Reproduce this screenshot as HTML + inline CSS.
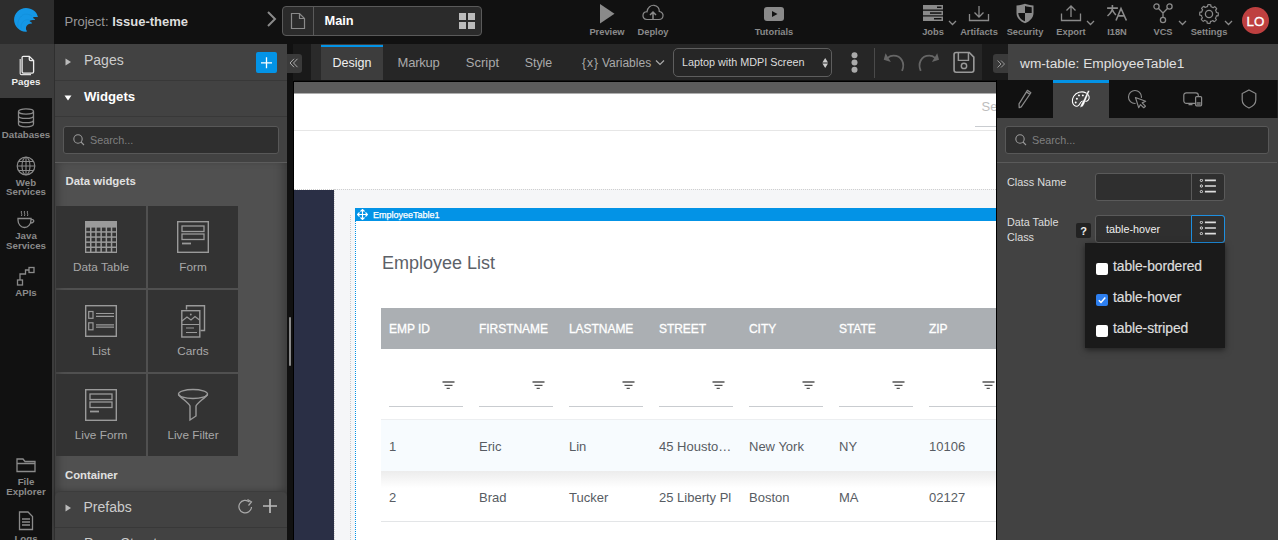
<!DOCTYPE html>
<html><head><meta charset="utf-8"><style>
html,body{margin:0;padding:0;width:1278px;height:540px;overflow:hidden;background:#111;}
body{position:relative;font-family:"Liberation Sans",sans-serif;}
.a{position:absolute;display:block;}
.t{position:absolute;line-height:1;white-space:nowrap;font-family:"Liberation Sans",sans-serif;}
</style></head><body>
<div class="a" style="left:0px;top:0px;width:1278px;height:44px;background:#111;"></div>
<div class="a" style="left:0px;top:0px;width:54px;height:44px;background:#2d2d2d;"></div>
<svg class="a" style="left:13px;top:7px;" width="26" height="26" viewBox="0 0 540 540"><path fill="#1497e6" d="M515 200 C500 100 390 20 270 20 C135 20 22 130 22 265 C22 400 130 510 265 515 C285 515 295 505 285 495 C265 470 262 420 285 390 C310 360 350 345 385 345 C400 345 400 332 390 325 C370 310 345 305 348 292 C352 278 400 272 445 270 C460 270 460 255 448 248 C430 238 410 230 418 218 C428 205 470 208 510 210 C525 210 522 198 515 200 Z"/><path fill="none" stroke="#0d7fc4" stroke-width="7" stroke-dasharray="14 6" d="M105 420 C85 320 120 220 210 160 C260 140 340 145 400 190 M170 445 C160 360 190 300 250 275 C290 262 330 268 350 280"/></svg>
<div class="t" style="left:64.5px;top:14px;line-height:15px;font-size:13px;color:#999;font-weight:400;">Project: <span style="color:#ddd;font-weight:700">Issue-theme</span></div>
<svg class="a" style="left:264px;top:9px;" width="14" height="20" viewBox="0 0 14 20"><path d="M4 3 L11 10 L4 17" fill="none" stroke="#8a8a8a" stroke-width="2"/></svg>
<div class="a" style="left:282px;top:6px;width:200px;height:30px;background:#2b2b2b;border:1px solid #5a5a5a;border-radius:4px;box-sizing:border-box;"></div>
<div class="a" style="left:313px;top:7px;width:1px;height:28px;background:#5a5a5a;"></div>
<svg class="a" style="left:290px;top:12px;" width="16" height="18" viewBox="0 0 16 18"><path d="M1.5 1.5 H9.5 L14.5 6.5 V16.5 H1.5 Z M9.5 1.5 V6.5 H14.5" fill="none" stroke="#8a8a8a" stroke-width="1.2"/></svg>
<div class="t" style="left:324.5px;top:13px;line-height:15px;font-size:12.8px;color:#fff;font-weight:700;">Main</div>
<svg class="a" style="left:459px;top:13px;" width="16" height="16" viewBox="0 0 16 16"><rect x="0" y="0" width="7" height="7" fill="#bbb"/><rect x="9" y="0" width="7" height="7" fill="#bbb"/><rect x="0" y="9" width="7" height="7" fill="#bbb"/><rect x="9" y="9" width="7" height="7" fill="#bbb"/></svg>
<svg class="a" style="left:600px;top:4px;" width="15" height="20" viewBox="0 0 15 20"><path d="M0 0 L14.5 9.7 L0 19.4 Z" fill="#8a8a8a"/></svg>
<div class="t" style="left:407px;width:400px;text-align:center;top:27px;line-height:10px;font-size:9.3px;color:#8a8a8a;font-weight:700;">Preview</div>
<svg class="a" style="left:642px;top:4px;" width="22" height="18" viewBox="0 0 22 18"><path d="M5 15.5 C1.5 15.5 0.8 12.5 1 11 C1.3 8.5 3.5 7.5 5 7.8 C5.5 3.5 9 1 12 1.3 C15.5 1.6 17.5 4.5 17.3 7.5 C20 7.8 21.3 10 21 12 C20.7 14.5 18.5 15.5 17 15.5 Z" fill="none" stroke="#8a8a8a" stroke-width="1.2"/><path d="M11 16 V8.5 M8 11 L11 8 L14 11" fill="none" stroke="#8a8a8a" stroke-width="1.5"/></svg>
<div class="t" style="left:453px;width:400px;text-align:center;top:27px;line-height:10px;font-size:9.3px;color:#8a8a8a;font-weight:700;">Deploy</div>
<svg class="a" style="left:764px;top:7px;" width="20" height="14" viewBox="0 0 20 14"><rect x="0" y="0" width="20" height="14" rx="3" fill="#8a8a8a"/><path d="M8 4 L13.5 7 L8 10 Z" fill="#111"/></svg>
<div class="t" style="left:574px;width:400px;text-align:center;top:27px;line-height:10px;font-size:9.3px;color:#8a8a8a;font-weight:700;">Tutorials</div>
<svg class="a" style="left:923px;top:5px;" width="20" height="16" viewBox="0 0 20 16"><rect x="0" y="0" width="20" height="4.5" fill="#8a8a8a"/><rect x="0" y="5.8" width="20" height="4.5" fill="#8a8a8a"/><rect x="0" y="11.5" width="20" height="4.5" fill="#8a8a8a"/><rect x="14" y="1.5" width="4.5" height="1.5" fill="#111"/><rect x="7" y="7.3" width="11.5" height="1.5" fill="#111"/><rect x="11" y="13" width="7.5" height="1.5" fill="#111"/></svg>
<div class="t" style="left:733px;width:400px;text-align:center;top:27px;line-height:10px;font-size:9.3px;color:#8a8a8a;font-weight:700;">Jobs</div>
<svg class="a" style="left:948px;top:19.5px;" width="9" height="6" viewBox="0 0 9 6"><path d="M1 1 L4.5 4.5 L8 1" fill="none" stroke="#8a8a8a" stroke-width="1.3"/></svg>
<svg class="a" style="left:968px;top:5px;" width="22" height="18" viewBox="0 0 22 18"><path d="M1.5 9 V15.5 H20.5 V9" fill="none" stroke="#8a8a8a" stroke-width="1.3"/><path d="M11 1 V12 M6.5 7.5 L11 12 L15.5 7.5" fill="none" stroke="#8a8a8a" stroke-width="1.3"/></svg>
<div class="t" style="left:779px;width:400px;text-align:center;top:27px;line-height:10px;font-size:9.3px;color:#8a8a8a;font-weight:700;">Artifacts</div>
<svg class="a" style="left:1015px;top:3px;" width="20" height="21" viewBox="0 0 20 21"><path d="M1.5 2.5 C5 2.5 8 1.5 10 0.8 C12 1.5 15 2.5 18.5 2.5 V10 C18.5 15 14.5 18.5 10 20.3 C5.5 18.5 1.5 15 1.5 10 Z" fill="#8a8a8a"/><path d="M10 3 V10 H3.3 C3.5 14 6.5 17 10 18.3 V10 H16.7 V4.2 C14.5 4.1 12 3.6 10 3 Z" fill="#111"/></svg>
<div class="t" style="left:825px;width:400px;text-align:center;top:27px;line-height:10px;font-size:9.3px;color:#8a8a8a;font-weight:700;">Security</div>
<svg class="a" style="left:1060px;top:4px;" width="22" height="19" viewBox="0 0 22 19"><path d="M1.5 9.5 V16.5 H20.5 V9.5" fill="none" stroke="#8a8a8a" stroke-width="1.3"/><path d="M11 13 V2 M6.5 6.5 L11 2 L15.5 6.5" fill="none" stroke="#8a8a8a" stroke-width="1.3"/></svg>
<div class="t" style="left:871px;width:400px;text-align:center;top:27px;line-height:10px;font-size:9.3px;color:#8a8a8a;font-weight:700;">Export</div>
<svg class="a" style="left:1086px;top:19.5px;" width="9" height="6" viewBox="0 0 9 6"><path d="M1 1 L4.5 4.5 L8 1" fill="none" stroke="#8a8a8a" stroke-width="1.3"/></svg>
<svg class="a" style="left:1102px;top:2px;" width="28" height="22" viewBox="0 0 28 22"><path d="M5.1 6.1 H15.9 M10.4 3 V6.1 C10.4 9 8 12 5.5 14 M10.4 7.8 C11 10 12.5 11.5 13.9 13 M14 18.5 L19 6.5 L24.4 18.5 M16 13.9 H22.2" fill="none" stroke="#8a8a8a" stroke-width="1.6"/></svg>
<div class="t" style="left:917px;width:400px;text-align:center;top:27px;line-height:10px;font-size:9.3px;color:#8a8a8a;font-weight:700;">I18N</div>
<svg class="a" style="left:1153px;top:3px;" width="20" height="21" viewBox="0 0 20 21"><circle cx="3.5" cy="3.5" r="2.6" fill="none" stroke="#8a8a8a" stroke-width="1.3"/><circle cx="16.5" cy="3.5" r="2.6" fill="none" stroke="#8a8a8a" stroke-width="1.3"/><circle cx="10" cy="17" r="2.6" fill="none" stroke="#8a8a8a" stroke-width="1.3"/><path d="M5.3 5.3 L10 10 L14.7 5.3 M10 10 V14.4" fill="none" stroke="#8a8a8a" stroke-width="1.3"/></svg>
<div class="t" style="left:963px;width:400px;text-align:center;top:27px;line-height:10px;font-size:9.3px;color:#8a8a8a;font-weight:700;">VCS</div>
<svg class="a" style="left:1178px;top:19.5px;" width="9" height="6" viewBox="0 0 9 6"><path d="M1 1 L4.5 4.5 L8 1" fill="none" stroke="#8a8a8a" stroke-width="1.3"/></svg>
<svg class="a" style="left:1199px;top:3.5px;" width="20" height="20" viewBox="0 0 20 20"><path d="M19.30 10.00 L19.28 10.61 L19.22 11.21 L19.12 11.81 L17.34 11.97 L17.20 12.44 L17.02 12.91 L16.82 13.36 L16.58 13.80 L16.32 14.22 L17.38 15.66 L16.99 16.13 L16.58 16.58 L16.13 16.99 L15.66 17.38 L15.17 17.73 L13.80 16.58 L13.36 16.82 L12.91 17.02 L12.44 17.20 L11.97 17.34 L11.48 17.45 L11.21 19.22 L10.61 19.28 L10.00 19.30 L9.39 19.28 L8.79 19.22 L8.19 19.12 L8.03 17.34 L7.56 17.20 L7.09 17.02 L6.64 16.82 L6.20 16.58 L5.78 16.32 L4.34 17.38 L3.87 16.99 L3.42 16.58 L3.01 16.13 L2.62 15.66 L2.27 15.17 L3.42 13.80 L3.18 13.36 L2.98 12.91 L2.80 12.44 L2.66 11.97 L2.55 11.48 L0.78 11.21 L0.72 10.61 L0.70 10.00 L0.72 9.39 L0.78 8.79 L0.88 8.19 L2.66 8.03 L2.80 7.56 L2.98 7.09 L3.18 6.64 L3.42 6.20 L3.68 5.78 L2.62 4.34 L3.01 3.87 L3.42 3.42 L3.87 3.01 L4.34 2.62 L4.83 2.27 L6.20 3.42 L6.64 3.18 L7.09 2.98 L7.56 2.80 L8.03 2.66 L8.52 2.55 L8.79 0.78 L9.39 0.72 L10.00 0.70 L10.61 0.72 L11.21 0.78 L11.81 0.88 L11.97 2.66 L12.44 2.80 L12.91 2.98 L13.36 3.18 L13.80 3.42 L14.22 3.68 L15.66 2.62 L16.13 3.01 L16.58 3.42 L16.99 3.87 L17.38 4.34 L17.73 4.83 L16.58 6.20 L16.82 6.64 L17.02 7.09 L17.20 7.56 L17.34 8.03 L17.45 8.52 L19.22 8.79 L19.28 9.39 Z" fill="none" stroke="#8a8a8a" stroke-width="1.2" stroke-linejoin="round"/><circle cx="10" cy="10" r="3.6" fill="none" stroke="#8a8a8a" stroke-width="1.3"/></svg>
<div class="t" style="left:1009px;width:400px;text-align:center;top:27px;line-height:10px;font-size:9.3px;color:#8a8a8a;font-weight:700;">Settings</div>
<svg class="a" style="left:1224px;top:19.5px;" width="9" height="6" viewBox="0 0 9 6"><path d="M1 1 L4.5 4.5 L8 1" fill="none" stroke="#8a8a8a" stroke-width="1.3"/></svg>
<div class="a" style="left:1242px;top:7px;width:27px;height:27px;border-radius:50%;background:#be4040;"></div>
<div class="t" style="left:1055.5px;width:400px;text-align:center;top:14px;line-height:15px;font-size:13.4px;color:#fff;font-weight:400;-webkit-text-stroke:0.3px #fff;">LO</div>
<div class="a" style="left:0px;top:44px;width:54px;height:496px;background:#3c3c3c;"></div>
<div class="a" style="left:0px;top:98px;width:52px;height:442px;background:#111;"></div>
<div class="a" style="left:0px;top:44px;width:54px;height:54px;background:#3c3c3c;"></div>
<svg class="a" style="left:17px;top:55px;" width="18" height="21" viewBox="0 0 18 21"><path d="M3.2 4 V18.5 Q3.2 19.6 4.3 19.6 H14" fill="none" stroke="#ddd" stroke-width="1.2"/><path d="M6.5 1.3 H12.3 L16.6 5.6 V16.8 Q16.6 18.2 15.2 18.2 H6.5 Q5.1 18.2 5.1 16.8 V2.7 Q5.1 1.3 6.5 1.3 Z M12.3 1.3 V4.2 Q12.3 5.6 13.7 5.6 H16.6" fill="none" stroke="#eee" stroke-width="1.3"/></svg>
<div class="t" style="left:-174px;width:400px;text-align:center;top:76px;line-height:11px;font-size:9.8px;color:#eee;font-weight:700;">Pages</div>
<svg class="a" style="left:17px;top:108px;" width="18" height="20" viewBox="0 0 18 20"><ellipse cx="9" cy="3.5" rx="7.5" ry="2.6" fill="none" stroke="#8a8a8a" stroke-width="1.3"/><path d="M1.5 3.5 V16 C1.5 17.5 4.5 18.8 9 18.8 C13.5 18.8 16.5 17.5 16.5 16 V3.5 M1.5 7.7 C1.5 9.2 4.5 10.4 9 10.4 C13.5 10.4 16.5 9.2 16.5 7.7 M1.5 11.9 C1.5 13.4 4.5 14.6 9 14.6 C13.5 14.6 16.5 13.4 16.5 11.9" fill="none" stroke="#8a8a8a" stroke-width="1.3"/></svg>
<div class="t" style="left:-174px;width:400px;text-align:center;top:129px;line-height:11px;font-size:9.7px;color:#8a8a8a;font-weight:700;">Databases</div>
<svg class="a" style="left:16px;top:156px;" width="20" height="20" viewBox="0 0 20 20"><circle cx="10" cy="10" r="8.8" fill="none" stroke="#8a8a8a" stroke-width="1.2"/><ellipse cx="10" cy="10" rx="4" ry="8.8" fill="none" stroke="#8a8a8a" stroke-width="1.1"/><path d="M1.2 10 H18.8 M2.5 5.5 H17.5 M2.5 14.5 H17.5 M10 1.2 V18.8" fill="none" stroke="#8a8a8a" stroke-width="1.1"/></svg>
<div class="t" style="left:-174px;width:400px;text-align:center;top:177px;line-height:11px;font-size:9.7px;color:#8a8a8a;font-weight:700;">Web</div>
<div class="t" style="left:-174px;width:400px;text-align:center;top:186px;line-height:11px;font-size:9.7px;color:#8a8a8a;font-weight:700;">Services</div>
<svg class="a" style="left:16px;top:210px;" width="20" height="19" viewBox="0 0 20 19"><path d="M2 8.5 H15 V10 C15 14.5 12 17.5 8.5 17.5 C5 17.5 2 14.5 2 10 Z" fill="none" stroke="#8a8a8a" stroke-width="1.3"/><path d="M15 9.5 C18.5 9 19 12.5 14.5 13" fill="none" stroke="#8a8a8a" stroke-width="1.3"/><path d="M5.5 1 C4.5 2.5 6.5 3.5 5.5 6 M8.5 1 C7.5 2.5 9.5 3.5 8.5 6 M11.5 1 C10.5 2.5 12.5 3.5 11.5 6" fill="none" stroke="#8a8a8a" stroke-width="1"/></svg>
<div class="t" style="left:-174px;width:400px;text-align:center;top:230px;line-height:11px;font-size:9.7px;color:#8a8a8a;font-weight:700;">Java</div>
<div class="t" style="left:-174px;width:400px;text-align:center;top:240px;line-height:11px;font-size:9.7px;color:#8a8a8a;font-weight:700;">Services</div>
<svg class="a" style="left:16px;top:266px;" width="20" height="21" viewBox="0 0 20 21"><rect x="1.5" y="14" width="5" height="5" fill="none" stroke="#8a8a8a" stroke-width="1.3"/><rect x="13" y="1.5" width="5" height="5" fill="none" stroke="#8a8a8a" stroke-width="1.3"/><path d="M4 14 V8 H9.5 V4 H13" fill="none" stroke="#8a8a8a" stroke-width="1.3"/></svg>
<div class="t" style="left:-174px;width:400px;text-align:center;top:287px;line-height:11px;font-size:9.7px;color:#8a8a8a;font-weight:700;">APIs</div>
<svg class="a" style="left:16px;top:457px;" width="20" height="16" viewBox="0 0 20 16"><path d="M1 2 H7 L9 4.5 H19 V14.5 H1 Z M1 6.5 H19" fill="none" stroke="#8a8a8a" stroke-width="1.3"/></svg>
<div class="t" style="left:-174px;width:400px;text-align:center;top:476px;line-height:11px;font-size:9.7px;color:#8a8a8a;font-weight:700;">File</div>
<div class="t" style="left:-174px;width:400px;text-align:center;top:486px;line-height:11px;font-size:9.7px;color:#8a8a8a;font-weight:700;">Explorer</div>
<svg class="a" style="left:18px;top:511px;" width="16" height="20" viewBox="0 0 16 20"><path d="M1.5 1 H10 L14.5 5.5 V18.5 H1.5 Z" fill="none" stroke="#8a8a8a" stroke-width="1.3"/><path d="M4 8 H12 M4 11 H12 M4 14 H12" stroke="#8a8a8a" stroke-width="1.5"/></svg>
<div class="t" style="left:-174px;width:400px;text-align:center;top:533px;line-height:11px;font-size:9.7px;color:#8a8a8a;font-weight:700;">Logs</div>
<div class="a" style="left:54px;top:44px;width:1px;height:496px;background:#2f2f2f;"></div>
<div class="a" style="left:55px;top:44px;width:232px;height:496px;background:#424242;"></div>
<div class="a" style="left:55px;top:80px;width:232px;height:1px;background:#383838;"></div>
<div class="a" style="left:55px;top:116px;width:232px;height:1px;background:#383838;"></div>
<svg class="a" style="left:65px;top:58px;" width="7" height="8" viewBox="0 0 7 8"><path d="M0.5 0.5 L6 4 L0.5 7.5 Z" fill="#bbb"/></svg>
<div class="t" style="left:84px;top:52px;line-height:16px;font-size:14px;color:#ccc;font-weight:400;">Pages</div>
<div class="a" style="left:256px;top:52px;width:21px;height:21px;background:#0393e6;border-radius:2px;"></div>
<svg class="a" style="left:256px;top:52px;" width="21" height="21" viewBox="0 0 21 21"><path d="M10.5 5.2 V16.3 M5 10.8 H16" stroke="#fff" stroke-width="1.3"/></svg>
<svg class="a" style="left:64px;top:95px;" width="8" height="6" viewBox="0 0 8 6"><path d="M0.5 0.5 H7.5 L4 5.5 Z" fill="#fff"/></svg>
<div class="t" style="left:84px;top:89px;line-height:15px;font-size:13.2px;color:#fff;font-weight:700;">Widgets</div>
<div class="a" style="left:63px;top:126px;width:216px;height:28px;background:#2f2f2f;border:1px solid #585858;border-radius:3px;box-sizing:border-box;"></div>
<svg class="a" style="left:73px;top:134px;" width="12" height="12" viewBox="0 0 12 12"><circle cx="5" cy="5" r="4.2" fill="none" stroke="#999" stroke-width="1.1"/><path d="M8 8 L11 11" stroke="#999" stroke-width="1.1"/></svg>
<div class="t" style="left:90px;top:134px;line-height:12px;font-size:10.8px;color:#7f7f7f;font-weight:400;">Search...</div>
<div class="a" style="left:55px;top:162px;width:232px;height:1px;background:#5c5c5c;"></div>
<div class="a" style="left:55px;top:163px;width:232px;height:377px;background:#505050;box-shadow:inset 6px 0 10px -4px rgba(0,0,0,0.3), inset -12px 0 10px -8px rgba(0,0,0,0.25);"></div>
<div class="t" style="left:65.5px;top:175px;line-height:12px;font-size:11.4px;color:#e0e0e0;font-weight:700;">Data widgets</div>
<div class="a" style="left:56px;top:206px;width:90px;height:82px;background:#333;"></div>
<div class="t" style="left:-99px;width:400px;text-align:center;top:260px;line-height:14px;font-size:11.8px;color:#a8a8a8;font-weight:400;">Data Table</div>
<div class="a" style="left:148px;top:206px;width:90px;height:82px;background:#333;"></div>
<div class="t" style="left:-7px;width:400px;text-align:center;top:260px;line-height:14px;font-size:11.8px;color:#a8a8a8;font-weight:400;">Form</div>
<div class="a" style="left:56px;top:290px;width:90px;height:82px;background:#333;"></div>
<div class="t" style="left:-99px;width:400px;text-align:center;top:344px;line-height:14px;font-size:11.8px;color:#a8a8a8;font-weight:400;">List</div>
<div class="a" style="left:148px;top:290px;width:90px;height:82px;background:#333;"></div>
<div class="t" style="left:-7px;width:400px;text-align:center;top:344px;line-height:14px;font-size:11.8px;color:#a8a8a8;font-weight:400;">Cards</div>
<div class="a" style="left:56px;top:374px;width:90px;height:82px;background:#333;"></div>
<div class="t" style="left:-99px;width:400px;text-align:center;top:428px;line-height:14px;font-size:11.8px;color:#a8a8a8;font-weight:400;">Live Form</div>
<div class="a" style="left:148px;top:374px;width:90px;height:82px;background:#333;"></div>
<div class="t" style="left:-7px;width:400px;text-align:center;top:428px;line-height:14px;font-size:11.8px;color:#a8a8a8;font-weight:400;">Live Filter</div>
<svg class="a" style="left:85px;top:221px;" width="32" height="32" viewBox="0 0 32 32"><rect x="0" y="0" width="32" height="32" fill="#9a9a9a"/><rect x="1.30" y="6.60" width="3.7" height="3.6" fill="#333"/><rect x="1.30" y="11.70" width="3.7" height="3.6" fill="#333"/><rect x="1.30" y="16.80" width="3.7" height="3.6" fill="#333"/><rect x="1.30" y="21.90" width="3.7" height="3.6" fill="#333"/><rect x="1.30" y="27.00" width="3.7" height="3.6" fill="#333"/><rect x="6.50" y="6.60" width="3.7" height="3.6" fill="#333"/><rect x="6.50" y="11.70" width="3.7" height="3.6" fill="#333"/><rect x="6.50" y="16.80" width="3.7" height="3.6" fill="#333"/><rect x="6.50" y="21.90" width="3.7" height="3.6" fill="#333"/><rect x="6.50" y="27.00" width="3.7" height="3.6" fill="#333"/><rect x="11.70" y="6.60" width="3.7" height="3.6" fill="#333"/><rect x="11.70" y="11.70" width="3.7" height="3.6" fill="#333"/><rect x="11.70" y="16.80" width="3.7" height="3.6" fill="#333"/><rect x="11.70" y="21.90" width="3.7" height="3.6" fill="#333"/><rect x="11.70" y="27.00" width="3.7" height="3.6" fill="#333"/><rect x="16.90" y="6.60" width="3.7" height="3.6" fill="#333"/><rect x="16.90" y="11.70" width="3.7" height="3.6" fill="#333"/><rect x="16.90" y="16.80" width="3.7" height="3.6" fill="#333"/><rect x="16.90" y="21.90" width="3.7" height="3.6" fill="#333"/><rect x="16.90" y="27.00" width="3.7" height="3.6" fill="#333"/><rect x="22.10" y="6.60" width="3.7" height="3.6" fill="#333"/><rect x="22.10" y="11.70" width="3.7" height="3.6" fill="#333"/><rect x="22.10" y="16.80" width="3.7" height="3.6" fill="#333"/><rect x="22.10" y="21.90" width="3.7" height="3.6" fill="#333"/><rect x="22.10" y="27.00" width="3.7" height="3.6" fill="#333"/><rect x="27.30" y="6.60" width="3.7" height="3.6" fill="#333"/><rect x="27.30" y="11.70" width="3.7" height="3.6" fill="#333"/><rect x="27.30" y="16.80" width="3.7" height="3.6" fill="#333"/><rect x="27.30" y="21.90" width="3.7" height="3.6" fill="#333"/><rect x="27.30" y="27.00" width="3.7" height="3.6" fill="#333"/></svg>
<svg class="a" style="left:177px;top:221px;" width="32" height="32" viewBox="0 0 32 32"><rect x="0.7" y="0.7" width="30.6" height="30.6" fill="none" stroke="#9a9a9a" stroke-width="1.4"/><rect x="5" y="5" width="22" height="5.5" fill="none" stroke="#9a9a9a" stroke-width="1.3"/><rect x="5" y="13" width="22" height="5.5" fill="none" stroke="#9a9a9a" stroke-width="1.3"/><path d="M5 22.5 H14" stroke="#9a9a9a" stroke-width="1.8"/></svg>
<svg class="a" style="left:85px;top:305px;" width="32" height="32" viewBox="0 0 32 32"><rect x="0.7" y="0.7" width="30.6" height="30.6" fill="none" stroke="#9a9a9a" stroke-width="1.4"/><rect x="3.7" y="6.5" width="4.3" height="6.8" fill="none" stroke="#9a9a9a" stroke-width="1.2"/><rect x="3.7" y="17.8" width="4.3" height="7" fill="none" stroke="#9a9a9a" stroke-width="1.2"/><path d="M11 8.5 H29 M11 11.4 H29 M11 19.8 H29 M11 22.2 H29" stroke="#9a9a9a" stroke-width="1.2"/></svg>
<svg class="a" style="left:177px;top:304px;" width="32" height="34" viewBox="0 0 32 34"><path d="M9.5 5.5 V1.7 H27.5 V26.5 H23.5" fill="none" stroke="#9a9a9a" stroke-width="1.4"/><rect x="4.8" y="6.7" width="18" height="26.3" fill="#333" stroke="#9a9a9a" stroke-width="1.4"/><path d="M5 17 L10 13 L14 16 L18 12.5 L22.5 16 M5 20.5 H22.5 M9 24 H17 M9 28.5 H20" fill="none" stroke="#9a9a9a" stroke-width="1.2"/><circle cx="13.8" cy="10.5" r="0.9" fill="#9a9a9a"/></svg>
<svg class="a" style="left:85px;top:389px;" width="32" height="32" viewBox="0 0 32 32"><rect x="0.7" y="0.7" width="30.6" height="30.6" fill="none" stroke="#9a9a9a" stroke-width="1.4"/><rect x="5" y="5" width="22" height="5.5" fill="none" stroke="#9a9a9a" stroke-width="1.3"/><rect x="5" y="13" width="22" height="5.5" fill="none" stroke="#9a9a9a" stroke-width="1.3"/><path d="M5 22.5 H14" stroke="#9a9a9a" stroke-width="1.8"/></svg>
<svg class="a" style="left:177px;top:388px;" width="32" height="34" viewBox="0 0 32 34"><ellipse cx="16" cy="6" rx="14.5" ry="4.5" fill="none" stroke="#9a9a9a" stroke-width="1.4"/><path d="M1.5 6.5 C4 10 12 15 13 18 V32 L19 28 V18 C20 15 28 10 30.5 6.5" fill="none" stroke="#9a9a9a" stroke-width="1.4"/></svg>
<div class="t" style="left:65px;top:469px;line-height:12px;font-size:11.3px;color:#e0e0e0;font-weight:700;">Container</div>
<div class="a" style="left:55px;top:491px;width:232px;height:37px;background:#424242;border-top:1px solid #3c3c3c;border-bottom:1px solid #383838;border-radius:5px 5px 0 0;box-sizing:border-box;box-shadow:0 -2px 4px rgba(0,0,0,0.15);"></div>
<svg class="a" style="left:65px;top:504px;" width="7" height="8" viewBox="0 0 7 8"><path d="M0.5 0.5 L6 4 L0.5 7.5 Z" fill="#bbb"/></svg>
<div class="t" style="left:83.5px;top:499px;line-height:16px;font-size:14px;color:#ccc;font-weight:400;">Prefabs</div>
<svg class="a" style="left:237px;top:498px;" width="18" height="17" viewBox="0 0 18 17"><path d="M14.5 9 A6.3 6.3 0 1 1 12.5 4" fill="none" stroke="#aaa" stroke-width="1.2"/><path d="M10.5 1.5 L14.5 3.8 L11.5 7.5" fill="none" stroke="#aaa" stroke-width="1.2"/></svg>
<svg class="a" style="left:262px;top:498px;" width="16" height="16" viewBox="0 0 16 16"><path d="M8 1 V15 M1 8 H15" stroke="#bbb" stroke-width="1.7"/></svg>
<div class="a" style="left:55px;top:528px;width:232px;height:12px;background:#424242;"></div>
<div class="t" style="left:84px;top:535px;line-height:16px;font-size:14px;color:#ccc;font-weight:400;">Page Structure</div>
<div class="a" style="left:287px;top:44px;width:6px;height:496px;background:#111;"></div>
<div class="a" style="left:293px;top:81px;width:1px;height:459px;background:#000;"></div>
<div class="a" style="left:289px;top:317px;width:2px;height:49px;background:#8a8a8a;border-radius:1px;"></div>
<div class="a" style="left:294px;top:44px;width:688px;height:36px;background:#262626;"></div>
<div class="a" style="left:293px;top:44px;width:28px;height:37px;background:#1a1a1a;"></div>
<div class="a" style="left:311px;top:44px;width:10px;height:36px;background:#2a2a2a;"></div>
<div class="a" style="left:321px;top:44px;width:62px;height:36px;background:#3d3d3d;"></div>
<div class="a" style="left:321px;top:45px;width:62px;height:2px;background:#0393e6;"></div>
<div class="a" style="left:287px;top:54px;width:15px;height:19px;background:#3a3a3a;border-radius:0 3px 3px 0;"></div>
<svg class="a" style="left:288px;top:57px;" width="12" height="12" viewBox="0 0 12 12"><path d="M6 1.8 L2 6 L6 10.2 M9.5 1.8 L5.5 6 L9.5 10.2" fill="none" stroke="#aaa" stroke-width="1"/></svg>
<div class="t" style="left:332.5px;top:56px;line-height:14px;font-size:12.5px;color:#f0f0f0;font-weight:400;letter-spacing:0px;">Design</div>
<div class="t" style="left:397.5px;top:55px;line-height:15px;font-size:13px;color:#aaa;font-weight:400;letter-spacing:-0.2px;">Markup</div>
<div class="t" style="left:465.8px;top:55px;line-height:15px;font-size:13px;color:#aaa;font-weight:400;">Script</div>
<div class="t" style="left:524.7px;top:56px;line-height:14px;font-size:12.4px;color:#aaa;font-weight:400;">Style</div>
<div class="t" style="left:582px;top:56px;line-height:14px;font-size:12px;color:#aaa;font-weight:400;letter-spacing:1px;">{x}</div>
<div class="t" style="left:602px;top:56px;line-height:14px;font-size:12px;color:#aaa;font-weight:400;">Variables</div>
<svg class="a" style="left:655px;top:59px;" width="10" height="7" viewBox="0 0 10 7"><path d="M1 1.5 L5 5.5 L9 1.5" fill="none" stroke="#aaa" stroke-width="1.2"/></svg>
<div class="a" style="left:673px;top:48px;width:159px;height:29px;background:#262626;border:1px solid #5e5e5e;border-radius:5px;box-sizing:border-box;"></div>
<div class="t" style="left:682px;top:56px;line-height:12px;font-size:10.8px;color:#ddd;font-weight:400;">Laptop with MDPI Screen</div>
<svg class="a" style="left:822px;top:57px;" width="7" height="12" viewBox="0 0 7 12"><path d="M3.2 1 L6 5.5 H0.4 Z M3.2 11 L6 6.6 H0.4 Z" fill="#ccc"/></svg>
<svg class="a" style="left:851px;top:52px;" width="7" height="21" viewBox="0 0 7 21"><circle cx="3.5" cy="3.2" r="3" fill="#aaa"/><circle cx="3.5" cy="10.5" r="3" fill="#aaa"/><circle cx="3.5" cy="17.8" r="3" fill="#aaa"/></svg>
<div class="a" style="left:874px;top:48px;width:1px;height:30px;background:#4a4a4a;"></div>
<svg class="a" style="left:878px;top:48px;" width="104" height="30" viewBox="0 0 1278 369"><path d="M295 282 C335 190 290 95 190 95 C160 95 138 105 118 122" fill="none" stroke="#666" stroke-width="22"/><path d="M92 66 L70 145 L158 172 Z" fill="#666"/><path d="M525 282 C485 190 530 95 630 95 C660 95 682 105 702 122" fill="none" stroke="#666" stroke-width="22"/><path d="M728 66 L750 145 L662 172 Z" fill="#666"/><path d="M960 55 H1122 L1178 112 V272 Q1178 298 1152 298 H960 Q935 298 935 272 V80 Q935 55 960 55 Z" fill="none" stroke="#999" stroke-width="20"/><path d="M988 60 V152 H1112 V60" fill="none" stroke="#999" stroke-width="18"/><circle cx="1057" cy="220" r="33" fill="none" stroke="#999" stroke-width="18"/></svg>
<div class="a" style="left:982px;top:44px;width:26px;height:36px;background:#1a1a1a;"></div>
<div class="a" style="left:993px;top:54px;width:15px;height:19px;background:#3a3a3a;border-radius:3px 0 0 3px;"></div>
<svg class="a" style="left:995px;top:58px;" width="12" height="12" viewBox="0 0 12 12"><path d="M2.5 2.5 L6 6 L2.5 9.5 M6 2.5 L9.5 6 L6 9.5" fill="none" stroke="#999" stroke-width="1"/></svg>
<div class="a" style="left:294px;top:80px;width:702px;height:1px;background:#111;"></div>
<div class="a" style="left:294px;top:81px;width:702px;height:1px;background:#000;"></div>
<div class="a" style="left:294px;top:82px;width:702px;height:11px;background:#5c5c5c;"></div>
<div class="a" style="left:294px;top:93px;width:702px;height:447px;background:#fff;"></div>
<div class="a" style="left:294px;top:93px;width:702px;height:1px;background:#aeaeae;"></div>
<div class="a" style="left:294px;top:130px;width:702px;height:1px;background:#e6e6e6;"></div>
<div class="t" style="left:981.5px;top:99px;line-height:15px;font-size:13px;color:#bdbdbd;font-weight:400;">Se</div>
<div class="a" style="left:975px;top:126px;width:21px;height:1px;background:#c9ccd0;"></div>
<div class="a" style="left:294px;top:190px;width:40px;height:350px;background:#2a2f45;"></div>
<div class="a" style="left:294px;top:189px;width:40px;height:1px;border-top:1px dotted #cfcfcf;box-sizing:border-box;"></div>
<div class="a" style="left:334px;top:189px;width:662px;height:351px;background:#f5f6f8;border-top:1px dotted #cfcfcf;border-left:1px dotted #cfcfcf;box-sizing:border-box;"></div>
<div class="a" style="left:350px;top:215px;width:1px;height:325px;border-left:1px dotted #c8c8c8;"></div>
<div class="a" style="left:355px;top:208px;width:641px;height:13px;background:#0393e6;"></div>
<svg class="a" style="left:357px;top:209px;" width="11" height="11" viewBox="0 0 11 11"><path d="M5.5 0.5 V10.5 M0.5 5.5 H10.5 M3.5 2.5 L5.5 0.5 L7.5 2.5 M3.5 8.5 L5.5 10.5 L7.5 8.5 M2.5 3.5 L0.5 5.5 L2.5 7.5 M8.5 3.5 L10.5 5.5 L8.5 7.5" fill="none" stroke="#fff" stroke-width="1.1"/></svg>
<div class="t" style="left:373px;top:210px;line-height:10px;font-size:9px;color:#fff;font-weight:400;-webkit-text-stroke:0.25px #fff;">EmployeeTable1</div>
<div class="a" style="left:355px;top:221px;width:641px;height:319px;background:#fff;border-left:1px dotted #0393e6;box-sizing:border-box;"></div>
<div class="t" style="left:382px;top:253px;line-height:20px;font-size:18px;color:#5c6168;font-weight:400;">Employee List</div>
<div class="a" style="left:381px;top:308px;width:615px;height:41px;background:#abafb3;"></div>
<div class="t" style="left:389px;top:322px;line-height:14px;font-size:12px;color:#fff;font-weight:400;letter-spacing:-0.05px;-webkit-text-stroke:0.3px #fff;">EMP ID</div>
<svg class="a" style="left:442px;top:381px;" width="13" height="9" viewBox="0 0 13 9"><path d="M0.5 1 H12.5 M2.5 4.3 H10.5 M4.6 7.4 H7.8" stroke="#555" stroke-width="1.3"/></svg>
<div class="a" style="left:389px;top:406px;width:74px;height:1px;background:#c9ccd0;"></div>
<div class="t" style="left:479px;top:322px;line-height:14px;font-size:12px;color:#fff;font-weight:400;letter-spacing:-0.05px;-webkit-text-stroke:0.3px #fff;">FIRSTNAME</div>
<svg class="a" style="left:532px;top:381px;" width="13" height="9" viewBox="0 0 13 9"><path d="M0.5 1 H12.5 M2.5 4.3 H10.5 M4.6 7.4 H7.8" stroke="#555" stroke-width="1.3"/></svg>
<div class="a" style="left:479px;top:406px;width:74px;height:1px;background:#c9ccd0;"></div>
<div class="t" style="left:569px;top:322px;line-height:14px;font-size:12px;color:#fff;font-weight:400;letter-spacing:-0.05px;-webkit-text-stroke:0.3px #fff;">LASTNAME</div>
<svg class="a" style="left:622px;top:381px;" width="13" height="9" viewBox="0 0 13 9"><path d="M0.5 1 H12.5 M2.5 4.3 H10.5 M4.6 7.4 H7.8" stroke="#555" stroke-width="1.3"/></svg>
<div class="a" style="left:569px;top:406px;width:74px;height:1px;background:#c9ccd0;"></div>
<div class="t" style="left:659px;top:322px;line-height:14px;font-size:12px;color:#fff;font-weight:400;letter-spacing:-0.05px;-webkit-text-stroke:0.3px #fff;">STREET</div>
<svg class="a" style="left:712px;top:381px;" width="13" height="9" viewBox="0 0 13 9"><path d="M0.5 1 H12.5 M2.5 4.3 H10.5 M4.6 7.4 H7.8" stroke="#555" stroke-width="1.3"/></svg>
<div class="a" style="left:659px;top:406px;width:74px;height:1px;background:#c9ccd0;"></div>
<div class="t" style="left:749px;top:322px;line-height:14px;font-size:12px;color:#fff;font-weight:400;letter-spacing:-0.05px;-webkit-text-stroke:0.3px #fff;">CITY</div>
<svg class="a" style="left:802px;top:381px;" width="13" height="9" viewBox="0 0 13 9"><path d="M0.5 1 H12.5 M2.5 4.3 H10.5 M4.6 7.4 H7.8" stroke="#555" stroke-width="1.3"/></svg>
<div class="a" style="left:749px;top:406px;width:74px;height:1px;background:#c9ccd0;"></div>
<div class="t" style="left:839px;top:322px;line-height:14px;font-size:12px;color:#fff;font-weight:400;letter-spacing:-0.05px;-webkit-text-stroke:0.3px #fff;">STATE</div>
<svg class="a" style="left:892px;top:381px;" width="13" height="9" viewBox="0 0 13 9"><path d="M0.5 1 H12.5 M2.5 4.3 H10.5 M4.6 7.4 H7.8" stroke="#555" stroke-width="1.3"/></svg>
<div class="a" style="left:839px;top:406px;width:74px;height:1px;background:#c9ccd0;"></div>
<div class="t" style="left:929px;top:322px;line-height:14px;font-size:12px;color:#fff;font-weight:400;letter-spacing:-0.05px;-webkit-text-stroke:0.3px #fff;">ZIP</div>
<svg class="a" style="left:982px;top:381px;" width="13" height="9" viewBox="0 0 13 9"><path d="M0.5 1 H12.5 M2.5 4.3 H10.5 M4.6 7.4 H7.8" stroke="#555" stroke-width="1.3"/></svg>
<div class="a" style="left:929px;top:406px;width:74px;height:1px;background:#c9ccd0;"></div>
<div class="a" style="left:381px;top:419px;width:615px;height:1px;background:#eceef0;"></div>
<div class="a" style="left:381px;top:420px;width:615px;height:51px;background:#f7fbfe;"></div>
<div class="a" style="left:381px;top:471px;width:615px;height:17px;background:linear-gradient(#ececec,#fff);"></div>
<div class="a" style="left:381px;top:521px;width:615px;height:1px;background:#e3e5e7;"></div>
<div class="t" style="left:389px;top:439px;line-height:15px;font-size:13px;color:#575c63;font-weight:400;">1</div>
<div class="t" style="left:479px;top:439px;line-height:15px;font-size:13px;color:#575c63;font-weight:400;">Eric</div>
<div class="t" style="left:569px;top:439px;line-height:15px;font-size:13px;color:#575c63;font-weight:400;">Lin</div>
<div class="t" style="left:659px;top:439px;line-height:15px;font-size:13px;color:#575c63;font-weight:400;">45 Housto…</div>
<div class="t" style="left:749px;top:439px;line-height:15px;font-size:13px;color:#575c63;font-weight:400;">New York</div>
<div class="t" style="left:839px;top:439px;line-height:15px;font-size:13px;color:#575c63;font-weight:400;">NY</div>
<div class="t" style="left:929px;top:439px;line-height:15px;font-size:13px;color:#575c63;font-weight:400;">10106</div>
<div class="t" style="left:389px;top:490px;line-height:15px;font-size:13px;color:#575c63;font-weight:400;">2</div>
<div class="t" style="left:479px;top:490px;line-height:15px;font-size:13px;color:#575c63;font-weight:400;">Brad</div>
<div class="t" style="left:569px;top:490px;line-height:15px;font-size:13px;color:#575c63;font-weight:400;">Tucker</div>
<div class="t" style="left:659px;top:490px;line-height:15px;font-size:13px;color:#575c63;font-weight:400;">25 Liberty Pl</div>
<div class="t" style="left:749px;top:490px;line-height:15px;font-size:13px;color:#575c63;font-weight:400;">Boston</div>
<div class="t" style="left:839px;top:490px;line-height:15px;font-size:13px;color:#575c63;font-weight:400;">MA</div>
<div class="t" style="left:929px;top:490px;line-height:15px;font-size:13px;color:#575c63;font-weight:400;">02127</div>
<div class="a" style="left:996px;top:80px;width:1px;height:460px;background:#000;"></div>
<div class="a" style="left:1008px;top:44px;width:270px;height:36px;background:#424242;"></div>
<div class="t" style="left:1020px;top:56px;line-height:15px;font-size:13.7px;color:#e0e0e0;font-weight:400;">wm-table: EmployeeTable1</div>
<div class="a" style="left:997px;top:80px;width:281px;height:38px;background:#111;"></div>
<div class="a" style="left:1053px;top:80px;width:56px;height:38px;background:#424242;"></div>
<div class="a" style="left:1053px;top:80px;width:56px;height:3px;background:#0393e6;"></div>
<div class="a" style="left:997px;top:118px;width:281px;height:422px;background:#424242;"></div>
<svg class="a" style="left:1012px;top:86px;" width="26" height="26" viewBox="0 0 540 540"><path d="M320 90 L392 140 L192 432 L150 450 L146 372 Z M298 122 L370 172" fill="none" stroke="#8a8a8a" stroke-width="26" stroke-linejoin="round"/></svg>
<svg class="a" style="left:1068px;top:86px;" width="26" height="26" viewBox="0 0 540 540"><path d="M92 330 C80 250 130 160 230 130 C300 112 380 130 425 190 C455 235 440 300 390 315 C350 325 320 300 285 320 C245 345 250 395 200 415 C150 432 100 390 92 330 Z" fill="none" stroke="#fff" stroke-width="22"/><circle cx="228" cy="195" r="20" fill="#fff"/><circle cx="308" cy="195" r="20" fill="#fff"/><circle cx="185" cy="265" r="20" fill="#fff"/><circle cx="160" cy="342" r="20" fill="#fff"/><path d="M438 92 L412 100 L318 300 C298 332 282 362 268 392 L248 448 L306 424 C338 386 350 346 360 316 L446 110 Z" fill="#fff" stroke="#424242" stroke-width="7"/></svg>
<svg class="a" style="left:1124px;top:86px;" width="26" height="26" viewBox="0 0 540 540"><circle cx="228" cy="228" r="135" fill="none" stroke="#8a8a8a" stroke-width="24"/><path d="M238 238 L450 318 L378 350 L445 420 L410 452 L342 386 L305 450 Z" fill="#111" stroke="#111" stroke-width="70" stroke-linejoin="round"/><path d="M238 238 L450 318 L378 350 L445 420 L410 452 L342 386 L305 450 Z" fill="#111" stroke="#8a8a8a" stroke-width="24" stroke-linejoin="round"/></svg>
<svg class="a" style="left:1183px;top:92px;" width="20" height="15" viewBox="0 0 20 15"><rect x="0.8" y="0.8" width="14.5" height="10.5" rx="2.5" fill="none" stroke="#8a8a8a" stroke-width="1.2"/><path d="M5.5 12.5 H9.5" stroke="#8a8a8a" stroke-width="1.5"/><rect x="12.6" y="4.6" width="6" height="9.2" rx="1" fill="#111" stroke="#8a8a8a" stroke-width="1.2"/><rect x="13.5" y="10" width="4.2" height="3" fill="#666"/></svg>
<svg class="a" style="left:1241px;top:89px;" width="16" height="20" viewBox="0 0 16 20"><path d="M8 1 L14.8 4.5 V11 C14.8 14.5 11.5 17.5 8 19 C4.5 17.5 1.2 14.5 1.2 11 V4.5 Z" fill="none" stroke="#8a8a8a" stroke-width="1.2"/></svg>
<div class="a" style="left:1277px;top:80px;width:1px;height:38px;background:#222;"></div>
<div class="a" style="left:1005px;top:126px;width:264px;height:28px;background:#2f2f2f;border:1px solid #585858;border-radius:3px;box-sizing:border-box;"></div>
<svg class="a" style="left:1015px;top:134px;" width="12" height="12" viewBox="0 0 12 12"><circle cx="5" cy="5" r="4.2" fill="none" stroke="#999" stroke-width="1.1"/><path d="M8 8 L11 11" stroke="#999" stroke-width="1.1"/></svg>
<div class="t" style="left:1032px;top:134px;line-height:12px;font-size:10.8px;color:#7f7f7f;font-weight:400;">Search...</div>
<div class="a" style="left:997px;top:162px;width:280px;height:1px;background:#5a5a5a;"></div>
<div class="t" style="left:1007px;top:176px;line-height:12px;font-size:10.9px;color:#ddd;font-weight:400;">Class Name</div>
<div class="a" style="left:1095px;top:173px;width:130px;height:28px;background:#2f2f2f;border:1px solid #5a5a5a;border-radius:3px;box-sizing:border-box;"></div>
<div class="a" style="left:1191px;top:174px;width:1px;height:26px;background:#5a5a5a;"></div>
<svg class="a" style="left:1199px;top:179px;" width="18" height="14" viewBox="0 0 18 14"><circle cx="2.4" cy="1.4" r="1.15" fill="none" stroke="#ddd" stroke-width="1"/><circle cx="2.4" cy="7" r="1.15" fill="none" stroke="#ddd" stroke-width="1"/><circle cx="2.4" cy="12.6" r="1.15" fill="none" stroke="#ddd" stroke-width="1"/><path d="M5.9 1.4 H16.9 M5.9 7 H16.9 M5.9 12.6 H16.9" stroke="#ddd" stroke-width="1.6"/></svg>
<div class="t" style="left:1007px;top:216px;line-height:12px;font-size:10.8px;color:#ddd;font-weight:400;">Data Table</div>
<div class="t" style="left:1007px;top:231px;line-height:12px;font-size:10.8px;color:#ddd;font-weight:400;">Class</div>
<div class="a" style="left:1076px;top:223px;width:15px;height:15px;background:#222;border-radius:2px;"></div>
<div class="t" style="left:883.5px;width:400px;text-align:center;top:225px;line-height:12px;font-size:11px;color:#eee;font-weight:700;">?</div>
<div class="a" style="left:1095px;top:215px;width:130px;height:28px;background:#2f2f2f;border:1px solid #5a5a5a;border-radius:3px;box-sizing:border-box;"></div>
<div class="a" style="left:1191px;top:215px;width:34px;height:28px;border:1px solid #1e8fe0;border-radius:0 3px 3px 0;box-sizing:border-box;"></div>
<svg class="a" style="left:1199px;top:221px;" width="18" height="14" viewBox="0 0 18 14"><circle cx="2.4" cy="1.4" r="1.15" fill="none" stroke="#ddd" stroke-width="1"/><circle cx="2.4" cy="7" r="1.15" fill="none" stroke="#ddd" stroke-width="1"/><circle cx="2.4" cy="12.6" r="1.15" fill="none" stroke="#ddd" stroke-width="1"/><path d="M5.9 1.4 H16.9 M5.9 7 H16.9 M5.9 12.6 H16.9" stroke="#ddd" stroke-width="1.6"/></svg>
<div class="t" style="left:1106px;top:223px;line-height:12px;font-size:10.8px;color:#eee;font-weight:400;">table-hover</div>
<div class="a" style="left:1085px;top:243px;width:140px;height:105px;background:#1a1a1a;box-shadow:0 2px 6px rgba(0,0,0,0.5);"></div>
<div class="a" style="left:1096px;top:263px;width:12px;height:12px;background:#fff;border-radius:2px;"></div>
<div class="t" style="left:1113px;top:258px;line-height:16px;font-size:13.9px;color:#ddd;font-weight:400;letter-spacing:-0.1px;-webkit-text-stroke:0.2px #ddd;">table-bordered</div>
<div class="a" style="left:1096px;top:294px;width:12px;height:12px;background:#2d7ff0;border-radius:2px;"></div>
<svg class="a" style="left:1096px;top:294px;" width="12" height="12" viewBox="0 0 12 12"><path d="M2.8 6.2 L5 8.5 L9.3 3.5" fill="none" stroke="#fff" stroke-width="1.5"/></svg>
<div class="t" style="left:1113px;top:289px;line-height:16px;font-size:13.9px;color:#ddd;font-weight:400;letter-spacing:-0.1px;-webkit-text-stroke:0.2px #ddd;">table-hover</div>
<div class="a" style="left:1096px;top:325px;width:12px;height:12px;background:#fff;border-radius:2px;"></div>
<div class="t" style="left:1113px;top:320px;line-height:16px;font-size:13.9px;color:#ddd;font-weight:400;letter-spacing:-0.1px;-webkit-text-stroke:0.2px #ddd;">table-striped</div>
</body></html>
